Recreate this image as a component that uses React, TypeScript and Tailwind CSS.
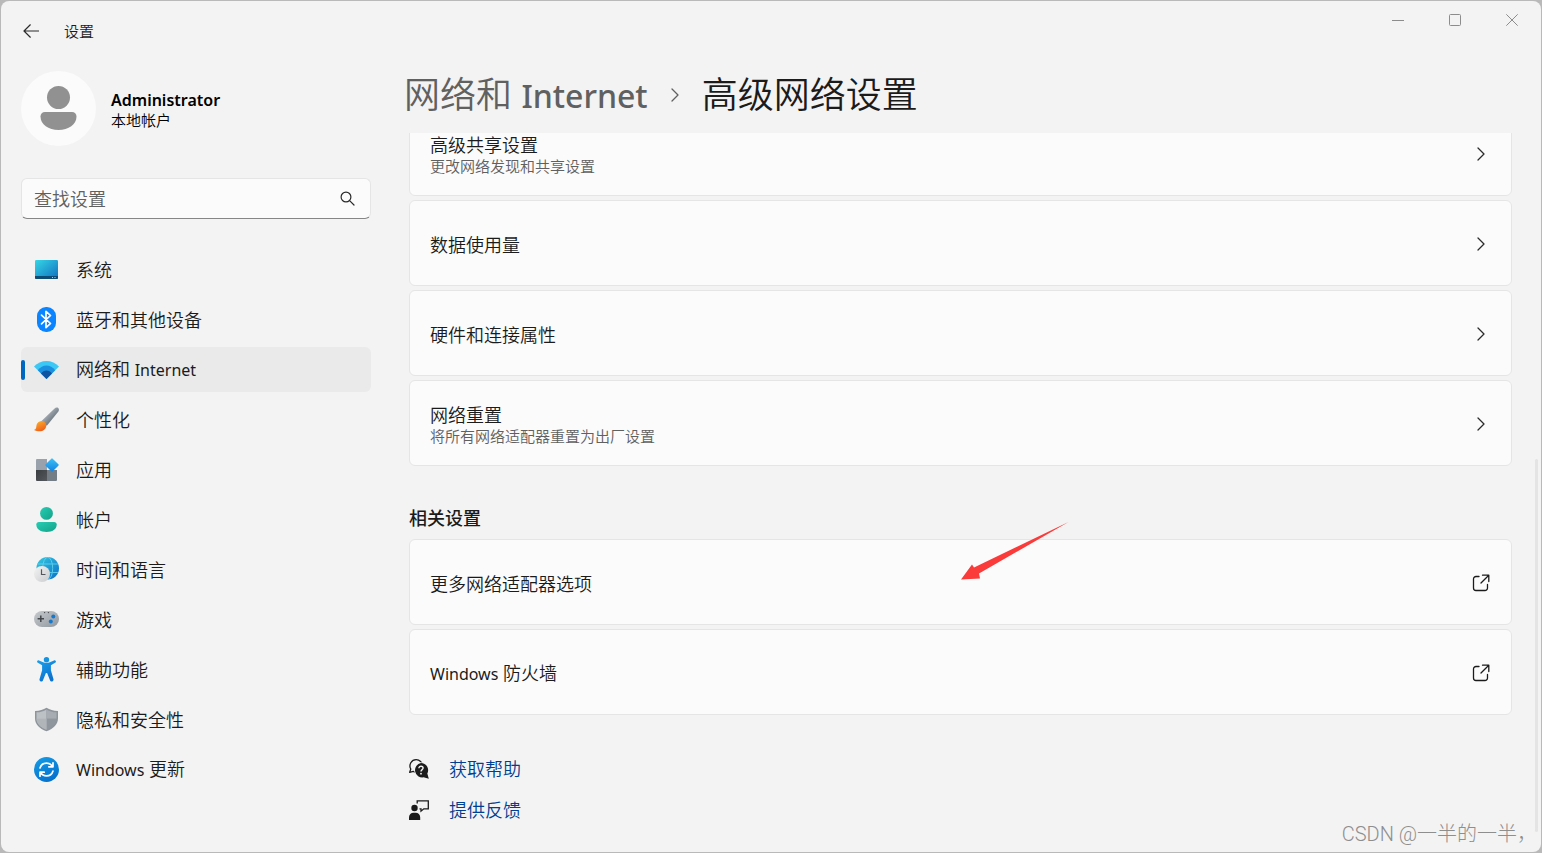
import React from "react";

type IconProps = { className?: string };

function NavSvg({ children }: { children: React.ReactNode }) {
  return (
    <svg viewBox="0 0 25 25" className="size-[25px] shrink-0" fill="none" aria-hidden="true">
      {children}
    </svg>
  );
}

const SystemIcon = () => (
  <NavSvg>
    <defs>
      <linearGradient id="sys" x1="0" y1="0" x2="1" y2="1">
        <stop stopColor="#35d6e6" />
        <stop offset="1" stopColor="#0f6fc0" />
      </linearGradient>
    </defs>
    <rect x="1" y="3" width="23" height="19" rx="1.3" fill="url(#sys)" />
    <path d="M1 19h23v1.7c0 .7-.6 1.3-1.3 1.3H2.300c-.7 0-1.300-.6-1.300-1.300z" fill="#0d4a74" />
    <path d="M18 20.500h1M20.500 20.500h1" stroke="#9fd4ee" strokeWidth="1" />
  </NavSvg>
);

const BluetoothIcon = () => (
  <NavSvg>
    <rect x="3" y="0" width="19" height="25" rx="9" fill="#0a84ff" />
    <path d="M7.500 8.200l9 8.300-4.500 4.200V4.300l4.500 4.200-9 8.300" stroke="#fff" strokeWidth="1.700" strokeLinejoin="round" strokeLinecap="round" />
  </NavSvg>
);

const WifiIcon = () => (
  <NavSvg>
    <path d="M12.500 22L0 9.500C3.300 6 7.700 4 12.500 4S21.700 6 25 9.500z" fill="#3cc8f5" />
    <path d="M12.500 22L3.800 13.200C6.100 10.300 9.200 8.600 12.500 8.600s6.400 1.700 8.700 4.600z" fill="#1a90df" />
    <path d="M12.500 22L7 16.500c1.400-1.900 3.400-3 5.500-3s4.100 1.100 5.500 3z" fill="#1053a0" />
  </NavSvg>
);

const BrushIcon = () => (
  <NavSvg>
    <defs>
      <linearGradient id="handle" x1="0.300" y1="0.300" x2="0.700" y2="0.700">
        <stop stopColor="#a9b2ba" />
        <stop offset="1" stopColor="#69727b" />
      </linearGradient>
      <linearGradient id="bristle" x1="0" y1="0" x2="0.500" y2="1">
        <stop stopColor="#fcb92f" />
        <stop offset="1" stopColor="#f0611c" />
      </linearGradient>
    </defs>
    <path d="M7.500 14L20.300 1.700c1.300-1.200 2.900-1.400 3.900-.6 1 .9.900 2.500-.2 3.900L12.800 18.800z" fill="url(#handle)" />
    <path d="M7.300 13.900c2.600-.2 5.200 2.200 5 4.900-.3 3.500-3.200 5.500-6.600 5.500-2.100 0-4.200-.3-5.700-1.300 2.700-.9 2-2.500 2.600-5.200.5-2.200 2.300-3.700 4.700-3.900z" fill="url(#bristle)" />
  </NavSvg>
);

const AppsIcon = () => (
  <NavSvg>
    <defs>
      <linearGradient id="dia" x1="0" y1="0" x2="1" y2="1">
        <stop stopColor="#3cc3f7" />
        <stop offset="1" stopColor="#1180e0" />
      </linearGradient>
      <linearGradient id="dark" x1="0" y1="0" x2="1" y2="1">
        <stop stopColor="#3a3d40" />
        <stop offset="1" stopColor="#54585d" />
      </linearGradient>
    </defs>
    <path d="M3.300 2H13v11H2V3.300C2 2.500 2.500 2 3.300 2z" fill="#99a2ac" />
    <path d="M2 13h11v11H3.300c-.8 0-1.300-.5-1.300-1.300z" fill="url(#dark)" />
    <path d="M13 13h10v9.700c0 .8-.5 1.300-1.300 1.300H13z" fill="#747c85" />
    <rect x="13" y="3" width="10" height="10" rx="1" fill="url(#dia)" transform="rotate(45 18 8)" />
  </NavSvg>
);

const AccountIcon = () => (
  <NavSvg>
    <defs>
      <linearGradient id="acc" x1="0" y1="0" x2="1" y2="1">
        <stop stopColor="#27cdb4" />
        <stop offset="1" stopColor="#12a288" />
      </linearGradient>
    </defs>
    <circle cx="12.500" cy="6.400" r="6.400" fill="url(#acc)" />
    <path d="M4.800 15h15.400c1.400 0 2.500 1.100 2.500 2.500 0 4.800-4.500 7.500-10.200 7.500S2.300 22.300 2.300 17.500C2.300 16.100 3.400 15 4.800 15z" fill="url(#acc)" />
  </NavSvg>
);

const TimeIcon = () => (
  <NavSvg>
    <defs>
      <linearGradient id="globe" x1="0" y1="0" x2="1" y2="1">
        <stop stopColor="#36cbe0" />
        <stop offset="1" stopColor="#0c6ec8" />
      </linearGradient>
      <linearGradient id="face" x1="0" y1="0" x2="1" y2="1">
        <stop stopColor="#f4f4f4" />
        <stop offset="1" stopColor="#c9cbcd" />
      </linearGradient>
    </defs>
    <circle cx="13.700" cy="11.300" r="11.300" fill="url(#globe)" />
    <g stroke="#68d8f0" strokeWidth="1" opacity="0.800">
      <ellipse cx="13.700" cy="11.300" rx="5" ry="11" />
      <path d="M3.500 7h20.400M3.500 15.500h20.400" />
    </g>
    <circle cx="8" cy="17" r="8" fill="url(#face)" />
    <path d="M7.500 12.300v5.200h4" stroke="#54585c" strokeWidth="1.200" />
  </NavSvg>
);

const GameIcon = () => (
  <NavSvg>
    <defs>
      <linearGradient id="pad" x1="0" y1="0" x2="1" y2="1">
        <stop stopColor="#c6cace" />
        <stop offset="1" stopColor="#90989f" />
      </linearGradient>
    </defs>
    <rect x="0" y="4" width="25" height="16" rx="8" fill="url(#pad)" />
    <path d="M6.800 8.500v6.400M3.600 11.700H10" stroke="#43474b" strokeWidth="1.500" />
    <circle cx="19.300" cy="9.400" r="2" fill="#1279d3" />
    <circle cx="16.800" cy="14.400" r="2" fill="#1279d3" />
    <circle cx="10.600" cy="5.600" r="0.700" fill="#43474b" />
    <circle cx="14.400" cy="5.600" r="0.700" fill="#43474b" />
  </NavSvg>
);

const AccessIcon = () => (
  <NavSvg>
    <defs>
      <linearGradient id="man" x1="0" y1="0" x2="0.500" y2="1">
        <stop stopColor="#1ba0ea" />
        <stop offset="1" stopColor="#0c72cf" />
      </linearGradient>
    </defs>
    <circle cx="12.500" cy="2.700" r="2.700" fill="#1592e0" />
    <path d="M3.200 4c.4-.7 1.100-.9 1.800-.6l4.100 1.800c2.200 1 4.600 1 6.800 0L20 3.400c.7-.3 1.400-.1 1.800.6.3.7 0 1.500-.7 1.800L16.900 8.300v5l2.600 9c.2.900-.3 1.900-1.200 2.200-1 .2-1.900-.2-2.200-1.100l-2.900-7.100c-.2-.5-1.200-.5-1.400 0l-2.900 7.100c-.3.900-1.200 1.300-2.200 1.100-.9-.3-1.400-1.300-1.200-2.200l2.600-9v-5L3.900 5.800C3.200 5.500 2.900 4.700 3.200 4z" fill="url(#man)" />
  </NavSvg>
);

const ShieldIcon = () => (
  <NavSvg>
    <path d="M12.500.7c3.200 2.100 6.700 3.100 11.500 3.200v7.400c0 6-4.300 10.200-11.500 13C5.300 21.500 1 17.300 1 11.300V3.900C5.800 3.800 9.300 2.800 12.500.7z" fill="#8d949b" />
    <path d="M12.500 2.400v20.300C6 20 2.500 16.300 2.500 11.300V5.300c4-.1 7-1 10-2.900z" fill="#bcc1c5" />
    <path d="M12.500 2.400c3 1.900 6 2.800 10 2.900v6.500h-10z" fill="#a6acb1" />
    <path d="M12.500 11.800h10c-.2 4.800-3.700 8.300-10 10.900z" fill="#8f969d" />
    <path d="M2.500 11.800h10v10.900C6.200 20.100 2.700 16.600 2.500 11.800z" fill="#b0b5ba" />
  </NavSvg>
);

const UpdateIcon = () => (
  <NavSvg>
    <defs>
      <linearGradient id="upd" x1="0" y1="0" x2="0.500" y2="1">
        <stop stopColor="#149de6" />
        <stop offset="1" stopColor="#0673cf" />
      </linearGradient>
    </defs>
    <circle cx="12.500" cy="12.500" r="12.500" fill="url(#upd)" />
    <g stroke="#fff" strokeWidth="1.700" strokeLinecap="round" strokeLinejoin="round">
      <path d="M6 11c.9-2.900 3.500-4.900 6.500-4.900 2.500 0 4.700 1.200 6 3.400M19 5.800v4h-4.200" />
      <path d="M19 14c-.9 2.900-3.500 4.900-6.500 4.900-2.500 0-4.700-1.200-6-3.400M6 19.200v-4h4.200" />
    </g>
  </NavSvg>
);

const SearchIcon = () => (
  <svg viewBox="0 0 15 15" className="size-[15px]" fill="none" stroke="#2b2b2b" strokeWidth="1.200" aria-hidden="true">
    <circle cx="6" cy="6" r="4.900" />
    <path d="M9.600 9.600l4.400 4.400" strokeLinecap="round" />
  </svg>
);

const ChevronIcon = ({ className }: IconProps) => (
  <svg viewBox="0 0 8 14" className={className} fill="none" stroke="currentColor" strokeWidth="1.300" strokeLinecap="round" strokeLinejoin="round" aria-hidden="true">
    <path d="M1 1l6 6-6 6" />
  </svg>
);

const ExternalIcon = () => (
  <svg viewBox="0 0 18 18" className="size-[18px]" fill="none" stroke="#1b1b1b" strokeWidth="1.300" strokeLinecap="round" strokeLinejoin="round" aria-hidden="true">
    <path d="M7 2.500H4A2.500 2.500 0 0 0 1.500 5v9A2.500 2.500 0 0 0 4 16.500h9a2.500 2.500 0 0 0 2.500-2.500v-3.500" />
    <path d="M10.500 1.200h6.300v6.300M16.800 1.200L9 9" />
  </svg>
);

const HelpIcon = () => (
  <svg viewBox="0 0 20 20" className="size-5" fill="none" aria-hidden="true">
    <path d="M7.200.7a6.200 6.200 0 0 1 0 12.400 6.200 6.200 0 0 1-3-.7L.7 13.300 1.800 10A6.200 6.200 0 0 1 7.200.7z" stroke="#1b1b1b" strokeWidth="1.300" strokeLinejoin="round" />
    <path d="M12 4a7.200 7.200 0 0 1 6.300 10.600L19.800 19.800l-5.200-1.500A7.200 7.200 0 1 1 12 4z" fill="#1b1b1b" stroke="#f3f3f3" strokeWidth="1.600" paintOrder="stroke" />
    <path d="M9.900 9.300c0-1.300.9-2.100 2.100-2.100s2.100.8 2.100 1.900c0 1.500-2.100 1.600-2.100 3.300" stroke="#f3f3f3" strokeWidth="1.400" />
    <circle cx="12" cy="14.700" r="0.900" fill="#f3f3f3" />
  </svg>
);

const FeedbackIcon = () => (
  <svg viewBox="0 0 20 20" className="size-5" fill="none" aria-hidden="true">
    <circle cx="5.500" cy="8" r="3.200" fill="#1b1b1b" />
    <path d="M0 20v-2.500C0 14.700 2 12.700 4.500 12.700h2.200c2.500 0 4.500 2 4.500 4.800V20z" fill="#1b1b1b" />
    <path d="M8.200 3.500V.8h11.100v8h-4.500L12 11.200V8.800h-1.500" stroke="#1b1b1b" strokeWidth="1.300" />
  </svg>
);

const Latin = ({ children }: { children: React.ReactNode }) => (
  <span className="text-base font-normal">{children}</span>
);

const navItems = [
  { label: "系统", Icon: SystemIcon },
  { label: "蓝牙和其他设备", Icon: BluetoothIcon },
  { label: <>网络和 <Latin>Internet</Latin></>, Icon: WifiIcon, active: true },
  { label: "个性化", Icon: BrushIcon },
  { label: "应用", Icon: AppsIcon },
  { label: "帐户", Icon: AccountIcon },
  { label: "时间和语言", Icon: TimeIcon },
  { label: "游戏", Icon: GameIcon },
  { label: "辅助功能", Icon: AccessIcon },
  { label: "隐私和安全性", Icon: ShieldIcon },
  { label: <><Latin>Windows</Latin> 更新</>, Icon: UpdateIcon },
];

type CardProps = { title: React.ReactNode; description?: string; external?: boolean };

function SettingCard({ title, description, external }: CardProps) {
  return (
    <button type="button" className="flex h-[86px] w-full items-center justify-between rounded-md border border-[#e5e5e5] bg-[#fbfbfb] pt-0.5 pr-[21px] pl-5 text-left">
      <span className="flex flex-col pt-px">
        <span className="text-lg leading-[22px] text-[#1b1b1b]">{title}</span>
        {description && <span className="text-[15px] leading-5 text-[#606060]">{description}</span>}
      </span>
      {external ? (
        <ExternalIcon />
      ) : (
        <span className="flex w-[18px] justify-center">
          <ChevronIcon className="h-3.5 w-2 text-[#2b2b2b]" />
        </span>
      )}
    </button>
  );
}

export default function App() {
  return (
    <div className="flex min-h-screen bg-[#b9b9b9] p-px font-['Noto_Sans','Noto_Sans_CJK_SC',sans-serif] font-[350] text-[#1b1b1b]">
      <div className="relative flex flex-1 flex-col overflow-hidden rounded-lg bg-[#f3f3f3]">
        <header className="flex h-[60px] items-start justify-between">
          <div className="flex h-[60px] items-center gap-[25px] pl-[22px]">
            <button type="button" aria-label="返回">
              <svg viewBox="0 0 16 14" className="h-3.5 w-4" fill="none" stroke="#2b2b2b" strokeWidth="1.200" strokeLinecap="round" strokeLinejoin="round">
                <path d="M7.300.8L1 7l6.300 6.200M1 7h14.500" />
              </svg>
            </button>
            <span className="text-[15px] leading-5">设置</span>
          </div>
          <div className="flex pr-px text-[#8c8c8c]">
            <button type="button" aria-label="最小化" className="flex h-[38px] w-[57px] items-center justify-center">
              <svg viewBox="0 0 12 12" className="size-3" stroke="currentColor">
                <path d="M0 6.500h12" />
              </svg>
            </button>
            <button type="button" aria-label="最大化" className="flex h-[38px] w-[57px] items-center justify-center">
              <svg viewBox="0 0 12 12" className="size-3" fill="none" stroke="currentColor">
                <rect x="0.500" y="0.500" width="11" height="11" rx="1" />
              </svg>
            </button>
            <button type="button" aria-label="关闭" className="flex h-[38px] w-[57px] items-center justify-center">
              <svg viewBox="0 0 12 12" className="size-3" stroke="currentColor">
                <path d="M.3.3l11.400 11.400M11.700.3L.3 11.700" />
              </svg>
            </button>
          </div>
        </header>

        <div className="flex flex-1">
          <aside className="ml-5 w-[350px] shrink-0 pt-2.5">
            <div className="flex items-center gap-[15px]">
              <svg viewBox="0 0 75 75" className="size-[75px]" aria-hidden="true">
                <circle cx="37.500" cy="37.500" r="37.500" fill="#fbfbfb" />
                <circle cx="37.500" cy="26.500" r="11.500" fill="#919191" />
                <path d="M24 41h27c2.700 0 4.500 1.800 4.500 4.500C55.500 53.500 47.500 59 37.500 59s-18-5.500-18-13.500C19.500 42.800 21.300 41 24 41z" fill="#919191" />
              </svg>
              <div className="flex flex-col pt-0.5">
                <span className="text-base leading-5 font-semibold text-black">Administrator</span>
                <span className="text-[15px] leading-5 text-black">本地帐户</span>
              </div>
            </div>

            <label className="mt-8 flex h-[41px] items-center rounded-md border border-[#e5e5e5] border-b-[#868686] bg-[#fbfbfb] pr-[15px] pl-3">
              <input type="text" aria-label="查找设置" placeholder="查找设置" className="min-w-0 flex-1 bg-transparent text-lg leading-6 outline-none placeholder:text-[#606060]" />
              <SearchIcon />
            </label>

            <nav className="mt-7 flex flex-col gap-[5px]">
              {navItems.map(({ label, Icon, active }, index) => (
                <a
                  key={index}
                  href="#"
                  className={
                    active
                      ? "relative flex h-[45px] items-center gap-[17px] rounded-md bg-[#eaeaea] pl-[13px]"
                      : "flex h-[45px] items-center gap-[17px] rounded-md pl-[13px]"
                  }
                >
                  {active && <span className="absolute top-[13px] left-0 h-5 w-1 rounded-full bg-[#0067c0]" />}
                  <Icon />
                  <span className="text-lg leading-6">{label}</span>
                </a>
              ))}
            </nav>
          </aside>

          <main className="min-w-0 flex-1 pt-2 pr-[29px] pl-[33px]">
            <h1 className="flex h-[52px] items-center text-4xl font-[350]">
              <a href="#" className="text-[#606060]">
                网络和 <span className="text-[32px] font-medium">Internet</span>
              </a>
              <ChevronIcon className="mx-[23px] h-3.5 w-2 text-[#606060]" />
              <span>高级网络设置</span>
            </h1>

            <div className="mt-3 overflow-hidden pl-[5px]">
              <div className="-mt-[23px] flex flex-col gap-1">
                <SettingCard title="高级共享设置" description="更改网络发现和共享设置" />
                <SettingCard title="数据使用量" />
                <SettingCard title="硬件和连接属性" />
                <SettingCard title="网络重置" description="将所有网络适配器重置为出厂设置" />
              </div>

              <h2 className="mt-10 mb-[9px] text-lg leading-6 font-medium">相关设置</h2>
              <div className="relative flex flex-col gap-1">
                <SettingCard title="更多网络适配器选项" external />
                <SettingCard title={<><Latin>Windows</Latin> 防火墙</>} external />
                <svg viewBox="0 0 108 58" className="pointer-events-none absolute -top-[17px] left-[552px] h-[58px] w-[108px]" aria-hidden="true">
                  <path d="M0 57.500L11 42.500l2 3L107.500 0 18 51.500l1 5z" fill="#fb3a3a" />
                </svg>
              </div>

              <div className="mt-[42px] flex flex-col gap-[17px] text-lg leading-6 text-[#003e92]">
                <a href="#" className="flex items-center gap-5">
                  <HelpIcon />
                  获取帮助
                </a>
                <a href="#" className="flex items-center gap-5">
                  <FeedbackIcon />
                  提供反馈
                </a>
              </div>
            </div>
          </main>
        </div>

        <div className="absolute right-[3px] bottom-5 h-[373px] w-[3px] rounded-full bg-[#e4e4e4]" />
        <div className="absolute right-1 bottom-1 font-['Roboto','Noto_Sans_CJK_SC',sans-serif] text-xl leading-7 font-light text-[#8e8e8e]">CSDN @一半的一半，</div>
      </div>
    </div>
  );
}
